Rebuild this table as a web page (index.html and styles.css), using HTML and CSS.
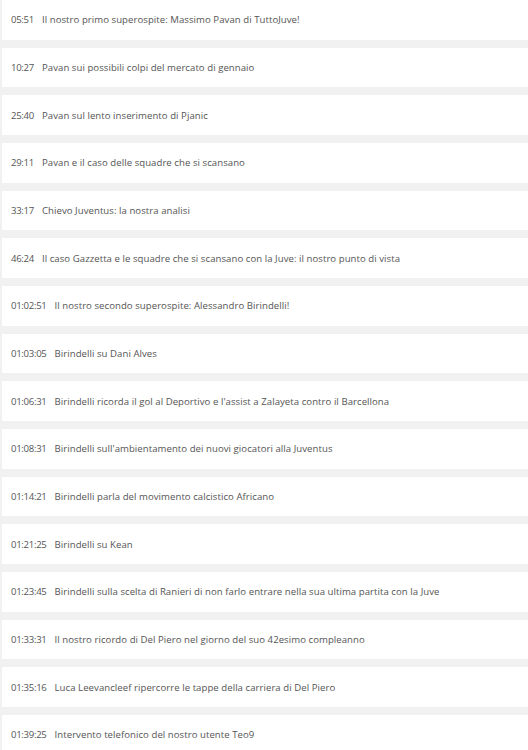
FILE: index.html
```html
<!DOCTYPE html>
<html lang="it">
<head>
    <meta charset="UTF-8">
    <meta name="viewport" content="width=device-width, initial-scale=1.0">
    <title>Capitoli</title>
    <link rel="stylesheet" href="styles.css">
</head>
<body>
    <ul class="chapters">
        <li class="chapter"><span class="time">05:51</span><span class="title">Il nostro primo superospite: Massimo Pavan di TuttoJuve!</span></li>
        <li class="chapter"><span class="time">10:27</span><span class="title">Pavan sui possibili colpi del mercato di gennaio</span></li>
        <li class="chapter"><span class="time">25:40</span><span class="title">Pavan sul lento inserimento di Pjanic</span></li>
        <li class="chapter"><span class="time">29:11</span><span class="title">Pavan e il caso delle squadre che si scansano</span></li>
        <li class="chapter"><span class="time">33:17</span><span class="title">Chievo Juventus: la nostra analisi</span></li>
        <li class="chapter"><span class="time">46:24</span><span class="title">Il caso Gazzetta e le squadre che si scansano con la Juve: il nostro punto di vista</span></li>
        <li class="chapter"><span class="time">01:02:51</span><span class="title">Il nostro secondo superospite: Alessandro Birindelli!</span></li>
        <li class="chapter"><span class="time">01:03:05</span><span class="title">Birindelli su Dani Alves</span></li>
        <li class="chapter"><span class="time">01:06:31</span><span class="title">Birindelli ricorda il gol al Deportivo e l'assist a Zalayeta contro il Barcellona</span></li>
        <li class="chapter"><span class="time">01:08:31</span><span class="title">Birindelli sull'ambientamento dei nuovi giocatori alla Juventus</span></li>
        <li class="chapter"><span class="time">01:14:21</span><span class="title">Birindelli parla del movimento calcistico Africano</span></li>
        <li class="chapter"><span class="time">01:21:25</span><span class="title">Birindelli su Kean</span></li>
        <li class="chapter"><span class="time">01:23:45</span><span class="title">Birindelli sulla scelta di Ranieri di non farlo entrare nella sua ultima partita con la Juve</span></li>
        <li class="chapter"><span class="time">01:33:31</span><span class="title">Il nostro ricordo di Del Piero nel giorno del suo 42esimo compleanno</span></li>
        <li class="chapter"><span class="time">01:35:16</span><span class="title">Luca Leevancleef ripercorre le tappe della carriera di Del Piero</span></li>
        <li class="chapter"><span class="time">01:39:25</span><span class="title">Intervento telefonico del nostro utente Teo9</span></li>
    </ul>
</body>
</html>
```

FILE: styles.css
```css
body {
    margin: 0;
    background-color: #f1f1f1;
    font-family: "Open Sans", "Noto Sans", sans-serif;
    font-size: 9.6px;
    color: #555;
}

.chapters {
    list-style: none;
    margin: 0;
    padding: 0;
}

.chapter {
    display: flex;
    align-items: center;
    height: 39.66px;
    margin: 0 0 8px 2px;
    padding-left: 9px;
    background-color: #fff;
}

.time {
    margin-right: 8px;
    letter-spacing: -0.3px;
}

.title {
    letter-spacing: 0.05px;
}
```
